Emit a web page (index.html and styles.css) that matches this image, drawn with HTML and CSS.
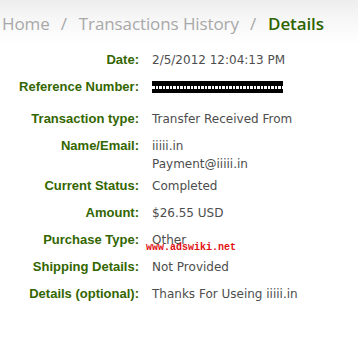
FILE: index.html
```
<!DOCTYPE html>
<html>
<head>
<meta charset="utf-8">
<link rel="stylesheet" href="styles.css">
</head>
<body>
<div class="page">
  <div class="crumbs">
    <span class="crumb">Home</span>
    <span class="sep">/</span>
    <span class="crumb">Transactions History</span>
    <span class="sep">/</span>
    <span class="crumb current">Details</span>
  </div>
  <div class="details">
    <div class="row"><div class="label">Date:</div><div class="value">2/5/2012 12:04:13 PM</div></div>
    <div class="row row-ref"><div class="label">Reference Number:</div><div class="value"><div class="redact"><div class="redact-strip"></div></div></div></div>
    <div class="row"><div class="label">Transaction type:</div><div class="value">Transfer Received From</div></div>
    <div class="row row-multi"><div class="label">Name/Email:</div><div class="value">iiiii.in<br>Payment@iiiii.in</div></div>
    <div class="row"><div class="label">Current Status:</div><div class="value">Completed</div></div>
    <div class="row"><div class="label">Amount:</div><div class="value">$26.55 USD</div></div>
    <div class="row"><div class="label">Purchase Type:</div><div class="value value-mark">Other<span class="watermark">www.adswiki.net</span></div></div>
    <div class="row"><div class="label">Shipping Details:</div><div class="value">Not Provided</div></div>
    <div class="row"><div class="label">Details (optional):</div><div class="value">Thanks For Useing iiiii.in</div></div>
  </div>
</div>
</body>
</html>
```
FILE: styles.css
```
html, body {
  margin: 0;
  padding: 0;
  background: #fff;
}
.page {
  width: 358px;
  height: 356px;
  background: linear-gradient(to bottom, #ededed 0px, #f7f7f7 20px, #ffffff 44px);
  overflow: hidden;
}
.crumbs {
  display: flex;
  align-items: baseline;
  padding: 12px 0 0 2px;
  height: 41px;
  box-sizing: border-box;
  font-family: "Open Sans", sans-serif;
  font-size: 17px;
  line-height: 24px;
  color: #a8a8a8;
  white-space: nowrap;
  letter-spacing: -0.1px;
}
.sep {
  margin: 0 12px 0 11px;
}
.current {
  color: #2e6400;
  font-weight: 600;
}
.details {
  display: flex;
  flex-direction: column;
  gap: 9px;
  padding-top: 10px;
}
.row {
  display: grid;
  grid-template-columns: 139px 1fr;
  column-gap: 13px;
  line-height: 18px;
}
.row-ref {
  margin-bottom: 5px;
}
.row-multi {
  margin-bottom: -5px;
}
.label {
  text-align: right;
  font-family: "Liberation Sans", Arial, sans-serif;
  font-weight: bold;
  font-size: 13px;
  color: #336600;
  white-space: nowrap;
}
.value {
  font-family: "DejaVu Sans", Verdana, sans-serif;
  font-size: 12px;
  color: #4d4d4d;
  white-space: nowrap;
}
.redact {
  width: 131px;
  height: 12px;
  margin-top: 3px;
  background: #000;
  display: flex;
  align-items: center;
}
.redact-strip {
  width: 100%;
  height: 3px;
  background: repeating-linear-gradient(to right, #fff 0px, #fff 3px, #000 3px, #000 4px, #fff 4px, #fff 6px, #000 6px, #000 7px);
}
.value-mark {
  position: relative;
}
.watermark {
  position: absolute;
  left: -6px;
  top: 12px;
  font-family: "Liberation Mono", "Courier New", monospace;
  font-size: 10px;
  font-weight: bold;
  line-height: 10px;
  color: #e01010;
}
```
